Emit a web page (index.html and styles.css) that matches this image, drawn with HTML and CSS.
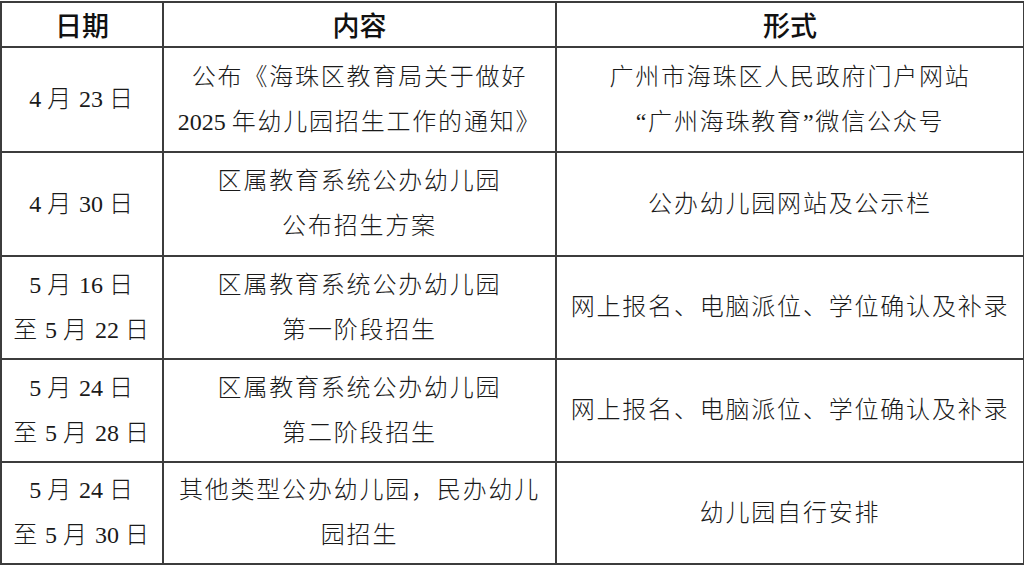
FILE: index.html
```html
<!DOCTYPE html>
<html lang="zh-CN">
<head>
<meta charset="utf-8">
<title>招生安排</title>
<link rel="stylesheet" href="styles.css">
</head>
<body>
<table class="schedule">
  <colgroup>
    <col class="c-date">
    <col class="c-content">
    <col class="c-form">
  </colgroup>
  <thead>
    <tr class="head-row">
      <th>日期</th>
      <th>内容</th>
      <th>形式</th>
    </tr>
  </thead>
  <tbody>
    <tr class="r1">
      <td><span class="num">4 </span>月<span class="num"> 23 </span>日</td>
      <td>公布《海珠区教育局关于做好<br><span class="num">2025 </span>年幼儿园招生工作的通知》</td>
      <td>广州市海珠区人民政府门户网站<br>“广州海珠教育”微信公众号</td>
    </tr>
    <tr class="r2">
      <td><span class="num">4 </span>月<span class="num"> 30 </span>日</td>
      <td>区属教育系统公办幼儿园<br>公布招生方案</td>
      <td>公办幼儿园网站及公示栏</td>
    </tr>
    <tr class="r3">
      <td><span class="num">5 </span>月<span class="num"> 16 </span>日<br>至<span class="num"> 5 </span>月<span class="num"> 22 </span>日</td>
      <td>区属教育系统公办幼儿园<br>第一阶段招生</td>
      <td>网上报名、电脑派位、学位确认及补录</td>
    </tr>
    <tr class="r4">
      <td><span class="num">5 </span>月<span class="num"> 24 </span>日<br>至<span class="num"> 5 </span>月<span class="num"> 28 </span>日</td>
      <td>区属教育系统公办幼儿园<br>第二阶段招生</td>
      <td>网上报名、电脑派位、学位确认及补录</td>
    </tr>
    <tr class="r5">
      <td><span class="num">5 </span>月<span class="num"> 24 </span>日<br>至<span class="num"> 5 </span>月<span class="num"> 30 </span>日</td>
      <td>其他类型公办幼儿园，民办幼儿<br>园招生</td>
      <td>幼儿园自行安排</td>
    </tr>
  </tbody>
</table>
</body>
</html>
```

FILE: styles.css
```css
html, body {
  margin: 0;
  padding: 0;
  background: #ffffff;
}

.schedule {
  margin: 1px 0 0 0;
  width: 1023px;
  border-collapse: collapse;
  table-layout: fixed;
  color: #1a1a1a;
}

.c-date { width: 162px; }
.c-content { width: 393px; }
.c-form { width: 468px; }

.schedule th,
.schedule td {
  border: 2px solid #3c3c3c;
  padding: 0;
  text-align: center;
  vertical-align: middle;
}

.schedule th {
  font-family: "Noto Sans CJK SC", sans-serif;
  font-weight: 500;
  font-size: 27px;
  line-height: 30px;
  color: #111111;
}

.schedule td {
  font-family: "Liberation Serif", "Noto Sans CJK SC", serif;
  font-weight: 300;
  font-size: 24px;
  line-height: 45px;
  letter-spacing: 1.8px;
}

.schedule .num {
  font-weight: 400;
  letter-spacing: 0;
}

.head-row { height: 45px; }
.r1 { height: 105px; }
.r2 { height: 104px; }
.r3 { height: 103px; }
.r4 { height: 103px; }
.r5 { height: 102px; }
```
